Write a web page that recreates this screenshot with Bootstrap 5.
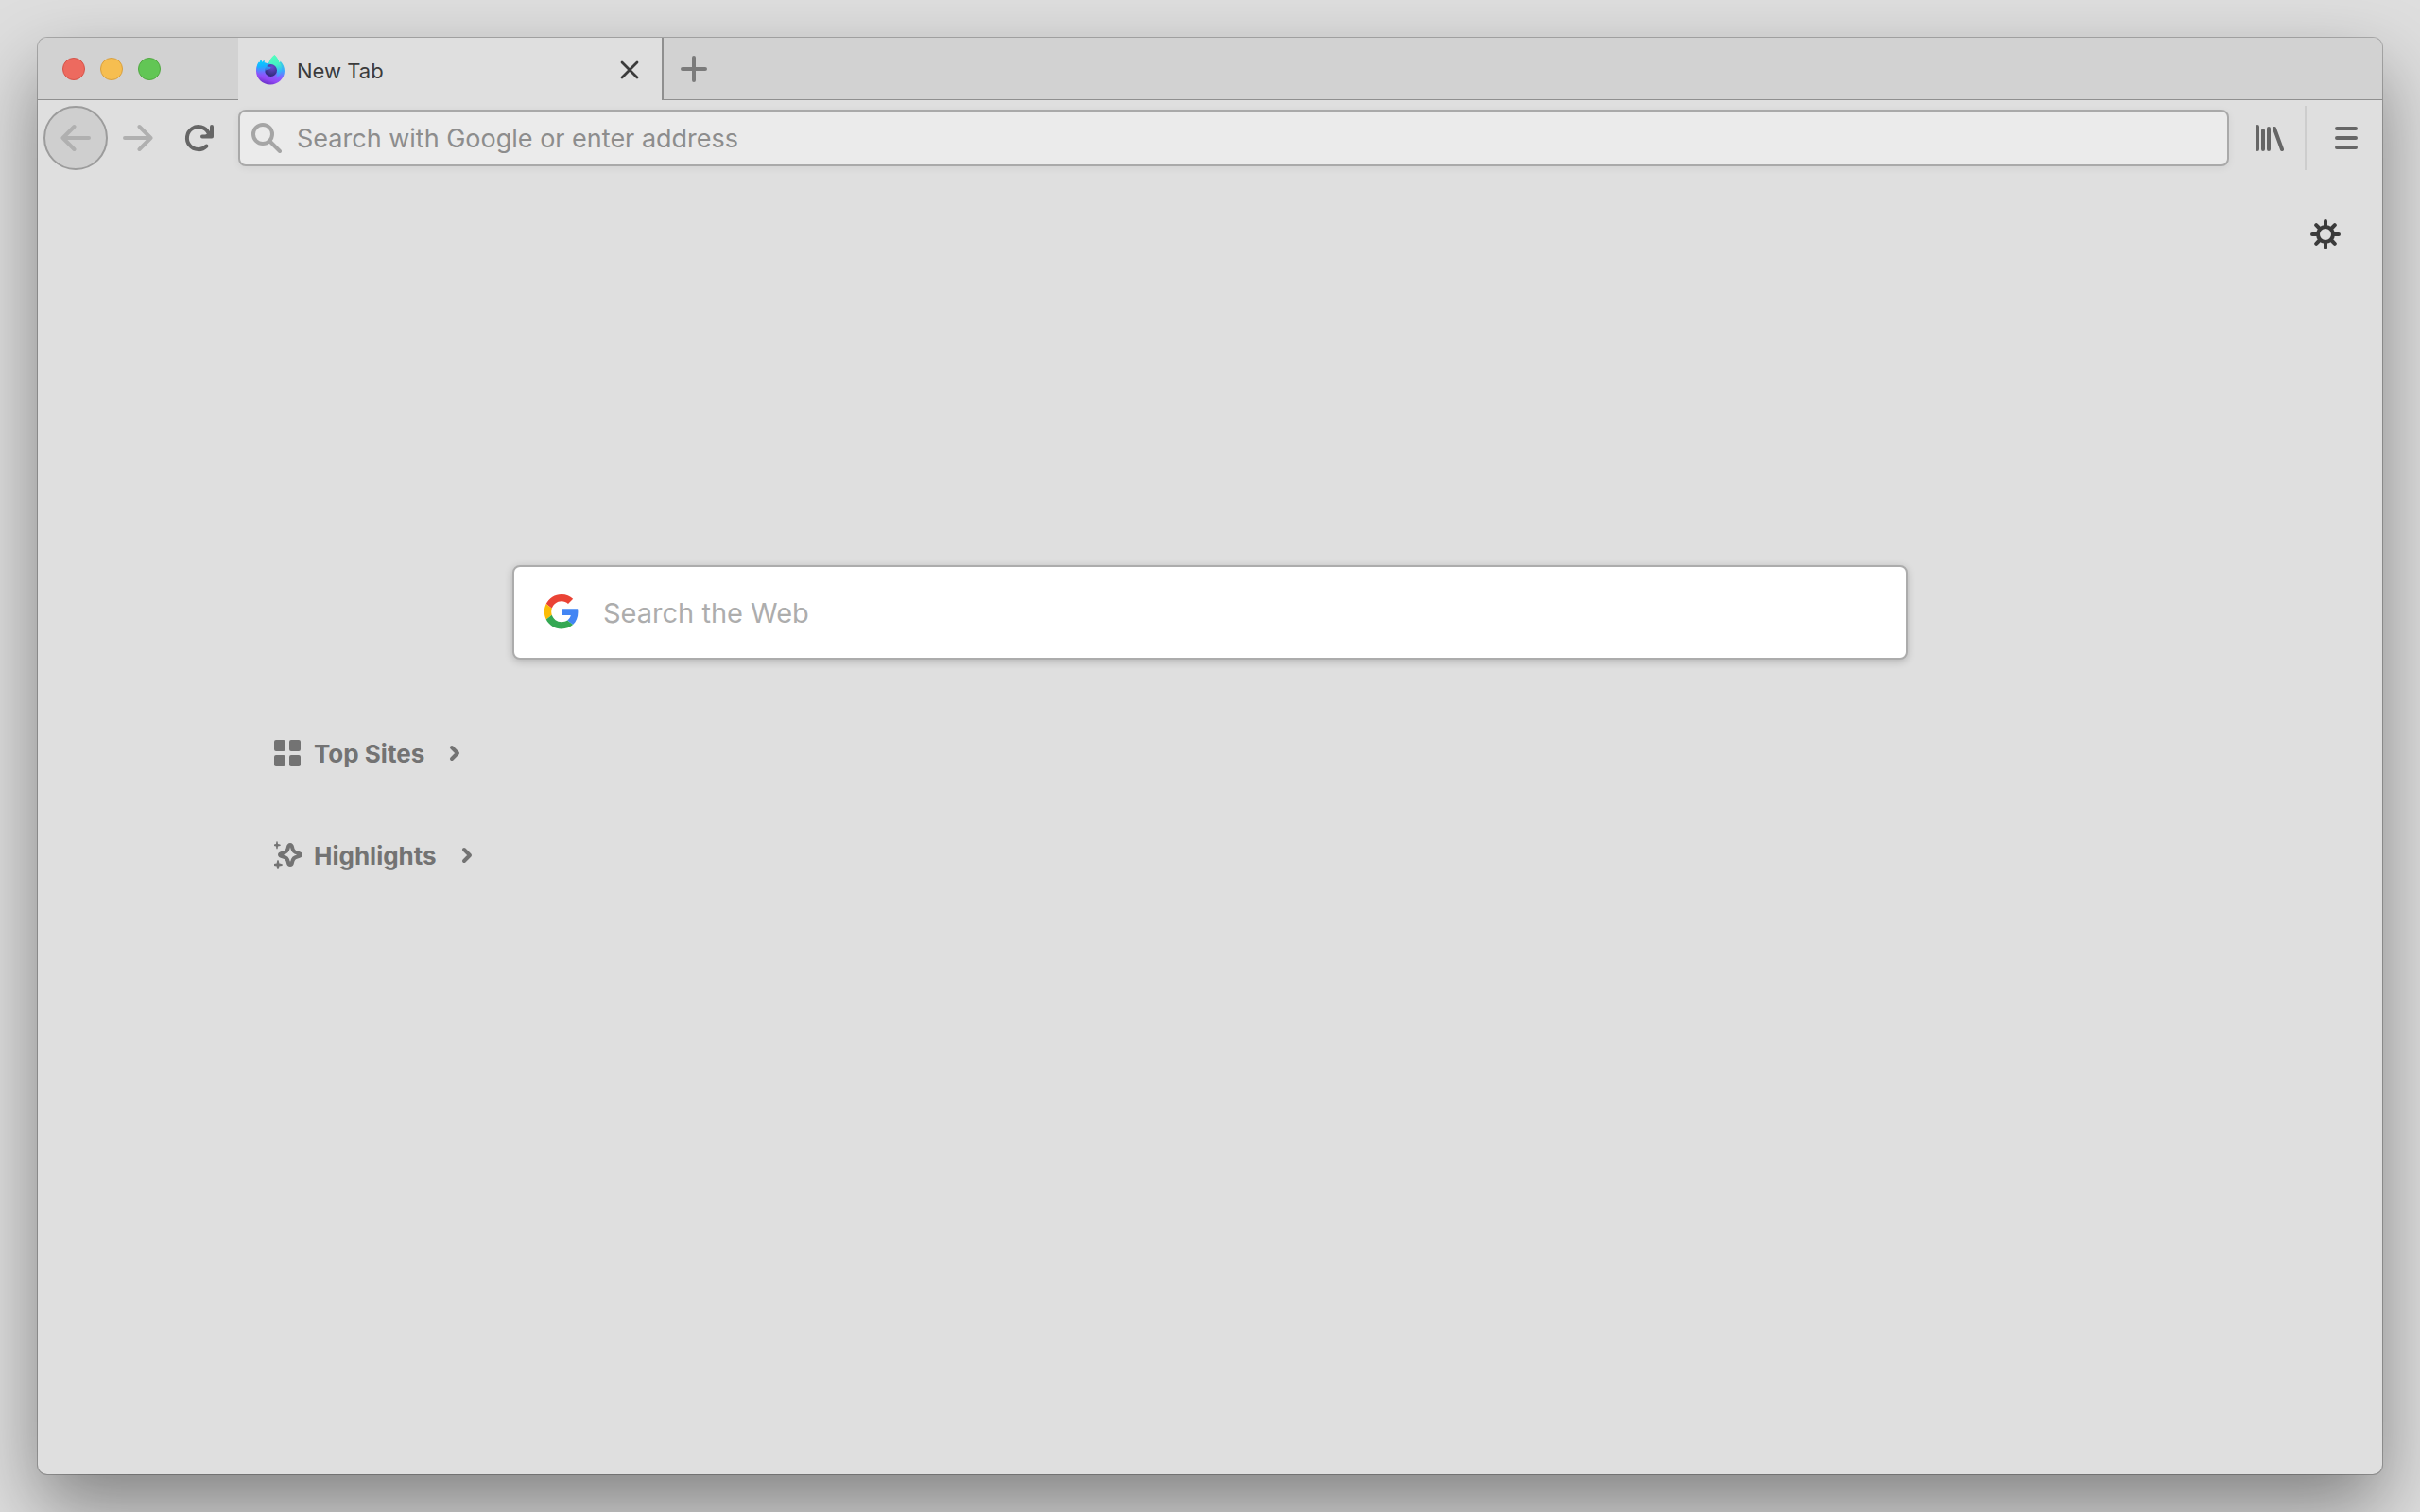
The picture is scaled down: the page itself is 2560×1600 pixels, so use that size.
<!DOCTYPE html>
<html lang="en">
<head>
<meta charset="utf-8">
<meta name="viewport" content="width=device-width, initial-scale=1">
<title>New Tab</title>
<link href="https://cdn.jsdelivr.net/npm/bootstrap@5.3.0/dist/css/bootstrap.min.css" rel="stylesheet">
<style>
  body { background: #dedede; font-family: Inter, "Noto Sans", sans-serif; color: #3b3b3b; }
  .desktop { padding: 40px; overflow: hidden; }
  .browser { background: #dfdfdf; border-radius: 10px; box-shadow: 0 0 0 1px rgba(0,0,0,.22), 0 36px 80px rgba(0,0,0,.41); }
  button.plain { border: 0; background: none; padding: 0; color: inherit; }
  svg { display: block; flex: none; }

  .tabstrip { height: 66px; }
  .lights, .strip-rest { background: #d2d2d2; border-bottom: 1px solid #8f8f8f; }
  .lights { width: 212px; padding-left: 26px; gap: 16px; border-top-left-radius: 10px; }
  .strip-rest { border-left: 2px solid #8f8f8f; padding-left: 18px; border-top-right-radius: 10px; color: #7b7b7b; }
  .light { width: 24px; height: 24px; border-radius: 50%; }
  button.light-close { background: #ed6a5f; border: 1px solid #d5544a; }
  button.light-min { background: #f6be50; border: 1px solid #d8a040; }
  button.light-max { background: #62c655; border: 1px solid #52a842; }
  .page-tab { width: 448px; padding: 2px 22px 0 18px; gap: 12px; font-size: 22px; line-height: 28px; }
  .page-tab span { padding-top: 2px; }

  .toolbar { height: 80px; padding-left: 6px; color: #666; }
  button.tool { height: 68px; width: 64px; }
  button.tool-back { width: 68px; border: 2px solid #9c9c9c; border-radius: 50%; background: #cfcfcf; color: #b0b0b0; }
  button.tool-next { color: #b0b0b0; }
  button.tool-wide { width: 80px; }
  .divider { width: 2px; height: 68px; background: #cdcdcd; }
  .address { height: 60px; margin-left: 10px; padding-left: 12px; gap: 16px; border: 2px solid #a9a9a9; border-radius: 8px; background: #ebebeb; box-shadow: 0 2px 8px rgba(0,0,0,.06); color: #a5a5a5; }
  .field { border: 0; outline: 0; padding: 2px 0 0; background: none; color: #333; }
  .address .field { font-size: 27px; line-height: 36px; }
  .address .field::placeholder { color: #8d8d8d; opacity: 1; }

  .page { min-height: 1374px; padding: 44px 42px; }
  .gear { color: #363636; }
  .content { max-width: 1980px; margin-top: 332px; }
  .web-search { max-width: 1476px; height: 100px; padding-left: 28px; gap: 22px; border: 2px solid #acacac; border-radius: 8px; background: #fff; box-shadow: 0 2px 8px rgba(0,0,0,.2); margin-bottom: 78px; }
  .web-search .field { font-size: 29px; line-height: 40px; }
  .web-search .field::placeholder { color: #adadad; opacity: 1; }
  button.section-link { height: 44px; margin-bottom: 64px; color: #737373; font-size: 26px; font-weight: 700; line-height: 44px; }
  .section-link svg { margin-bottom: 2px; }
  .section-link svg:first-child { margin-right: 10px; }
  .section-link svg:last-child { margin-left: 22px; }
</style>
<script src="https://cdn.jsdelivr.net/npm/bootstrap@5.3.0/dist/js/bootstrap.bundle.min.js"></script>
</head>
<body>
<div class="desktop">
  <div class="browser">
    <header>
      <div class="tabstrip d-flex">
        <div class="lights d-flex align-items-center">
          <button class="plain light light-close" aria-label="Close window"></button>
          <button class="plain light light-min" aria-label="Minimize window"></button>
          <button class="plain light light-max" aria-label="Zoom window"></button>
        </div>
        <div class="page-tab d-flex align-items-center">
          <svg width="32" height="32" viewBox="0 0 32 32" aria-hidden="true">
            <defs>
              <linearGradient id="fxBody" x1=".7" y1=".1" x2=".4" y2="1">
                <stop offset="0" stop-color="#38dcd8"/><stop offset=".35" stop-color="#3aa8ff"/><stop offset=".62" stop-color="#8a5cff"/><stop offset=".82" stop-color="#9248f4"/><stop offset="1" stop-color="#6a32c8"/>
              </linearGradient>
              <linearGradient id="fxTail" x1=".4" y1="0" x2=".6" y2="1">
                <stop offset="0" stop-color="#54ffbd"/><stop offset=".45" stop-color="#44f0c4"/><stop offset=".75" stop-color="#34b8f8"/><stop offset="1" stop-color="#6a78ff"/>
              </linearGradient>
              <linearGradient id="fxHead" x1=".3" y1="0" x2=".4" y2="1">
                <stop offset="0" stop-color="#00d8ff"/><stop offset=".4" stop-color="#18b0ff"/><stop offset="1" stop-color="#8a58ff" stop-opacity="0"/>
              </linearGradient>
              <radialGradient id="fxGlobe" cx=".6" cy=".25" r=".8">
                <stop offset="0" stop-color="#6a48d0"/><stop offset="1" stop-color="#28286e"/>
              </radialGradient>
            </defs>
            <path fill="url(#fxBody)" d="M20.500 .500C23 3 24.500 5 25 8C26 9 26.500 8 26.500 6.500C29.500 10 31 13 31 17C31 25 24.500 31.500 16 31.500S1 25 1 17C1 13 2 10 4 7.500L4.500 8.500L6 5.500L7.500 8L9.500 6V8.500C11 8.500 12.500 9 13.500 9.500C16 6 17 4 20.500 .500Z"/>
            <path fill="url(#fxTail)" d="M20.500 0C23 3 24.500 5 25.500 8C28.500 11 29 16 27 20C26 22 24.500 23.500 22 24.500C24.500 20 23 15 20 12.500C18 10 16 9 14.500 9.500C15 5 17 3 20.500 0Z"/>
            <circle cx="16.500" cy="16.500" r="6.500" fill="url(#fxGlobe)"/>
            <path fill="url(#fxHead)" d="M4 7.500L4.500 8.500L6 5L7.500 8L9.500 5.500V8.500C12 8.500 13 9.500 13.500 10.500C12 11.500 12 12 13 12.500C15 13 17 12.500 16.500 14C16 15.500 12.500 15.500 11 16.500C9.500 19.500 11.500 22 15 23C10 26 3 22 1.500 17C1.500 13 2 10 4 7.500Z"/>
          </svg>
          <span class="flex-grow-1">New Tab</span>
          <button class="plain" aria-label="Close tab"><svg width="24" height="24" viewBox="0 0 24 24" fill="none" stroke="currentColor" stroke-width="2.800" stroke-linecap="round"><path d="M4 4L20 20M20 4L4 20"/></svg></button>
        </div>
        <div class="strip-rest d-flex align-items-center flex-grow-1">
          <button class="plain" aria-label="Open a new tab"><svg width="28" height="28" viewBox="0 0 28 28" fill="none" stroke="currentColor" stroke-width="4" stroke-linecap="round"><path d="M14 2V26M2 14H26"/></svg></button>
        </div>
      </div>
      <nav class="toolbar d-flex align-items-center">
        <button class="plain tool tool-back d-flex align-items-center justify-content-center" aria-label="Back"><svg width="32" height="32" viewBox="0 0 32 32" fill="none" stroke="currentColor" stroke-width="4" stroke-linecap="round" stroke-linejoin="round"><path d="M30 16H2.500M14.500 4L2.500 16L14.500 28"/></svg></button>
        <button class="plain tool tool-next d-flex align-items-center justify-content-center" aria-label="Forward"><svg width="32" height="32" viewBox="0 0 32 32" fill="none" stroke="currentColor" stroke-width="4" stroke-linecap="round" stroke-linejoin="round"><path d="M2 16H29.500M17.500 4L29.500 16L17.500 28"/></svg></button>
        <button class="plain tool d-flex align-items-center justify-content-center" aria-label="Reload"><svg width="32" height="32" viewBox="0 0 32 32" fill="none" stroke="currentColor" stroke-width="4" stroke-linecap="round" stroke-linejoin="round"><path d="M24.500 24.500A12 12 0 1 1 26.500 10.500"/><path d="M30 4V14.500H20"/><path fill="currentColor" stroke="none" d="M30 7V14H22Z"/></svg></button>
        <label class="address d-flex align-items-center flex-grow-1">
          <svg width="32" height="32" viewBox="0 0 32 32" fill="none" stroke="currentColor" stroke-linecap="round"><circle cx="12" cy="12" r="10" stroke-width="4"/><path stroke-width="4" d="M20 20L30 30"/></svg>
          <input class="field flex-grow-1" type="text" aria-label="Address" placeholder="Search with Google or enter address">
        </label>
        <button class="plain tool tool-wide d-flex align-items-center justify-content-center" aria-label="Library"><svg width="36" height="36" viewBox="0 0 36 36" fill="none" stroke="currentColor" stroke-width="4" stroke-linecap="round"><path d="M8 6V30M14 10V30M20 8V30M26 8L34 30"/></svg></button>
        <div class="divider"></div>
        <button class="plain tool tool-wide d-flex align-items-center justify-content-center" aria-label="Menu"><svg width="32" height="32" viewBox="0 0 32 32" fill="none" stroke="currentColor" stroke-width="4" stroke-linecap="round"><path d="M8 6H28M8 16H28M8 26H28"/></svg></button>
      </nav>
    </header>
    <main class="page">
      <div class="d-flex justify-content-end">
        <button class="plain gear" aria-label="Personalize"><svg width="36" height="36" viewBox="0 0 36 36" fill="none" stroke="currentColor" stroke-width="4" stroke-linecap="round"><circle cx="18" cy="18" r="8"/><path d="M18 4V9M18 27V32M4 18H9M27 18H32M8.200 8.200L11.500 11.500M24.500 24.500L27.800 27.800M8.200 27.800L11.500 24.500M24.500 11.500L27.800 8.200"/></svg></button>
      </div>
      <div class="content mx-auto">
        <label class="web-search d-flex align-items-center mx-auto">
          <svg width="44" height="44" viewBox="-5 -4 58 58" aria-hidden="true"><path fill="#ea4335" d="M24 9.500c3.540 0 6.710 1.220 9.210 3.600l6.850-6.850C35.900 2.380 30.470 0 24 0 14.620 0 6.510 5.380 2.560 13.220l7.980 6.190C12.430 13.720 17.740 9.500 24 9.500z"/><path fill="#4285f4" d="M46.980 24.550c0-1.570-.15-3.090-.38-4.550H24v9.020h12.940c-.58 2.960-2.260 5.480-4.780 7.180l7.730 6c4.510-4.180 7.090-10.360 7.090-17.650z"/><path fill="#fbbc05" d="M10.530 28.590c-.48-1.450-.76-2.990-.76-4.590s.27-3.140.76-4.590l-7.980-6.190C.92 16.460 0 20.120 0 24s.92 7.540 2.560 10.780l7.970-6.190z"/><path fill="#34a853" d="M24 48c6.480 0 11.930-2.130 15.890-5.810l-7.730-6c-2.150 1.450-4.920 2.300-8.160 2.300-6.260 0-11.570-4.220-13.470-9.910l-7.980 6.190C6.510 42.620 14.620 48 24 48z"/></svg>
          <input class="field flex-grow-1" type="search" aria-label="Search the Web" placeholder="Search the Web">
        </label>
        <div class="d-flex">
          <button class="plain section-link d-flex align-items-center"><svg width="32" height="32" viewBox="0 0 32 32" fill="currentColor"><rect x="0" y="2" width="12" height="12" rx="2"/><rect x="16" y="2" width="12" height="12" rx="2"/><rect x="0" y="18" width="12" height="12" rx="2"/><rect x="16" y="18" width="12" height="12" rx="2"/></svg>Top Sites<svg width="20" height="20" viewBox="0 0 20 20" fill="none" stroke="currentColor" stroke-width="4" stroke-linecap="round" stroke-linejoin="round"><path d="M7 4L13 10L7 16"/></svg></button>
        </div>
        <div class="d-flex">
          <button class="plain section-link d-flex align-items-center"><svg width="32" height="32" viewBox="0 0 32 32" fill="currentColor"><path fill="none" stroke="currentColor" stroke-width="4" stroke-linejoin="round" d="M17 5C18.300 5 18.800 6 19.200 8C19.800 11.500 21 12.800 24.500 13.500C27 14 28 14.500 28 15.500S27 17 24.500 17.500C21 18.200 19.800 19.500 19.200 23C18.800 25 18.300 26 17 26S15.200 25 14.800 23C14.200 19.500 13 18.200 9.500 17.500C7 17 6 16.500 6 15.500S7 14 9.500 13.500C13 12.800 14.200 11.500 14.800 8C15.200 6 15.700 5 17 5Z"/><path d="M3 1Q3.800 1 4 4Q7 4.500 7 5.200T4 6.400Q3.800 9.500 3 9.500T2 6.400Q-1 6 -1 5.200T2 4Q2.200 1 3 1ZM4 21Q5 21 5.300 24.500Q9 25 9 26T5.300 27.500Q5 31 4 31T2.700 27.500Q-1 27 -1 26T2.700 24.500Q3 21 4 21Z"/></svg>Highlights<svg width="20" height="20" viewBox="0 0 20 20" fill="none" stroke="currentColor" stroke-width="4" stroke-linecap="round" stroke-linejoin="round"><path d="M7 4L13 10L7 16"/></svg></button>
        </div>
      </div>
    </main>
  </div>
</div>
</body>
</html>
